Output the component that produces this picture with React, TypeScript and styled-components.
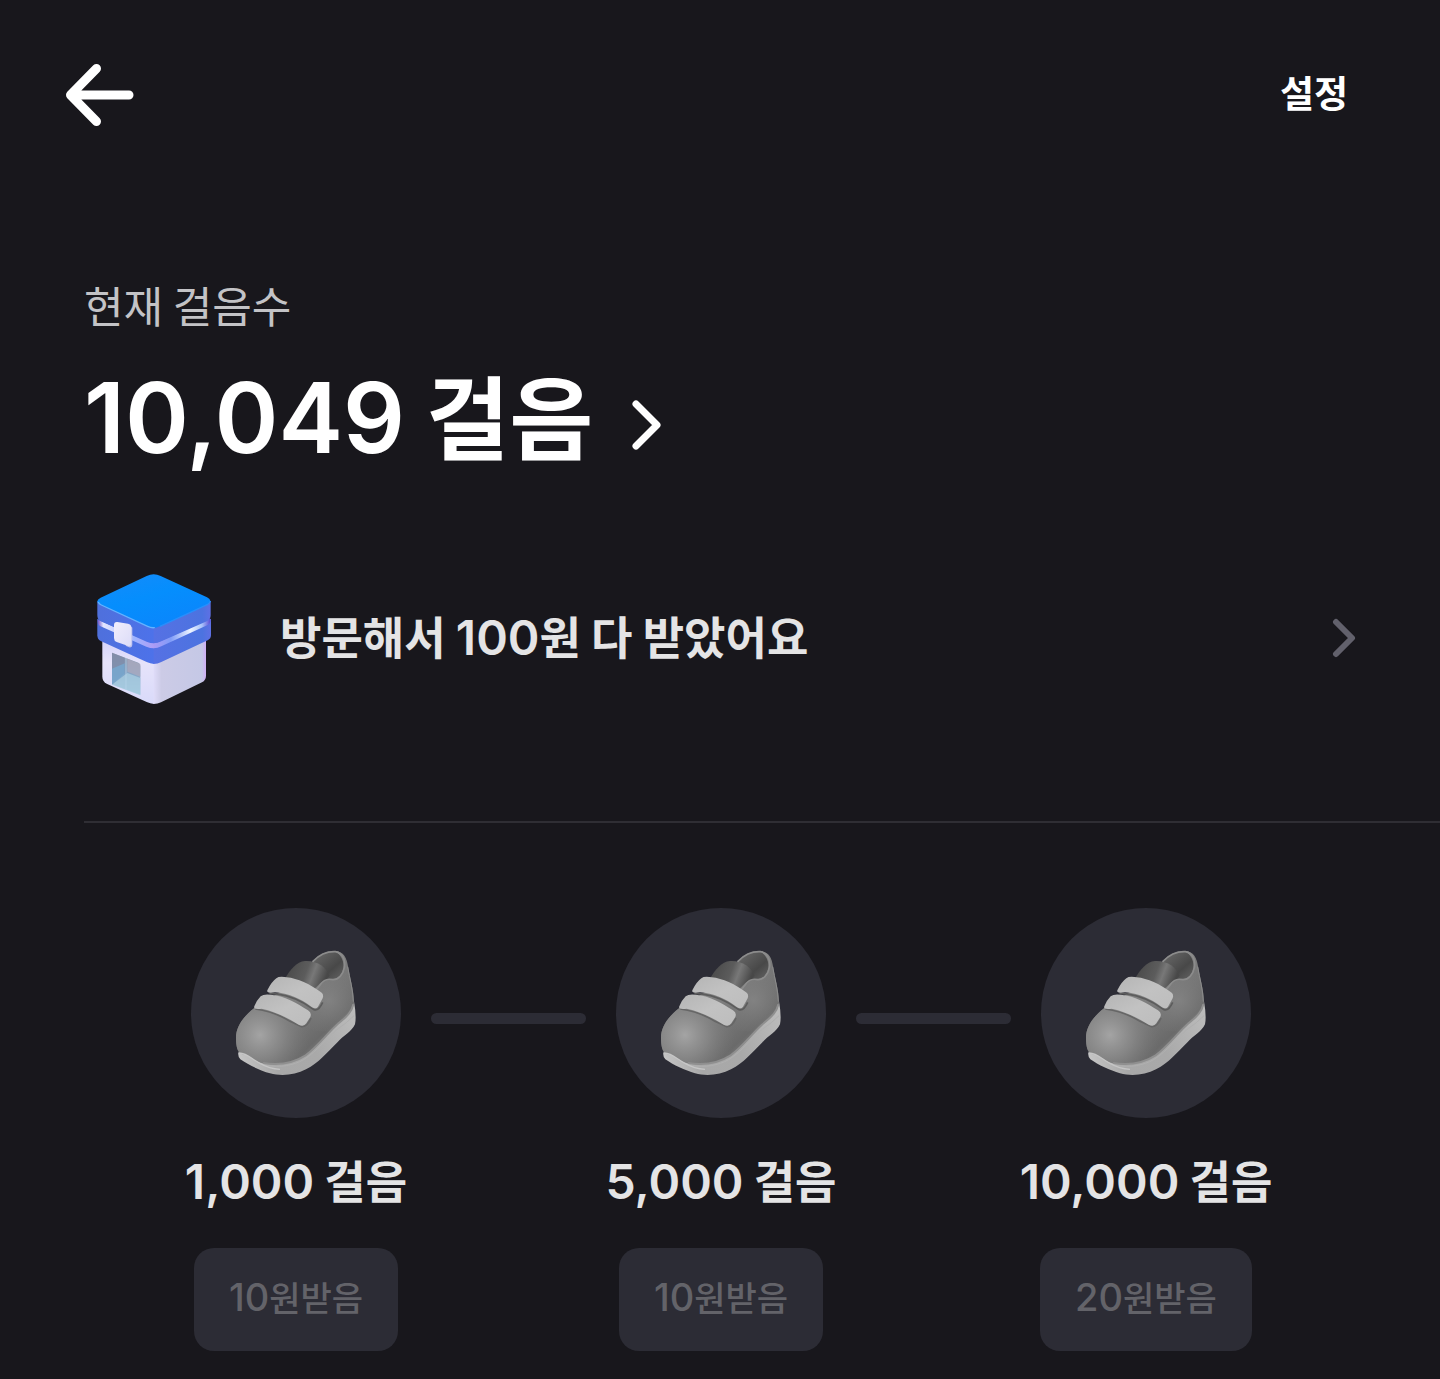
import React from "react";
import styled, { createGlobalStyle } from "styled-components";

const GlobalStyle = createGlobalStyle`
  *, *::before, *::after { box-sizing: border-box; }
  html { background: #18171c; }
  body {
    margin: 0;
    background: #18171c;
    color: #ffffff;
    font-family: Inter, "Noto Sans CJK KR", sans-serif;
  }
  h1, h2, p, ol { margin: 0; padding: 0; }
`;

const Page = styled.main`
  display: flex;
  flex-direction: column;
  padding-bottom: 28px;
`;

const TopBar = styled.header`
  display: flex;
  align-items: center;
  justify-content: space-between;
  height: 190px;
  padding: 0 92px 0 60px;
`;

const PlainButton = styled.button`
  display: flex;
  align-items: center;
  padding: 0;
  border: 0;
  background: none;
  color: inherit;
  font: inherit;
  text-align: left;
  cursor: pointer;
`;

const SettingsButton = styled(PlainButton)`
  font-size: 37px;
  font-weight: 600;
  line-height: 48px;
`;

const Summary = styled.section`
  display: flex;
  flex-direction: column;
  align-items: flex-start;
  padding: 82px 84px 0;
`;

const SummaryLabel = styled.p`
  color: #c3c3c6;
  font-family: "Noto Sans CJK KR", sans-serif;
  font-size: 43px;
  font-weight: 400;
  line-height: 64px;
`;

const SummaryButton = styled(PlainButton)`
  gap: 38px;
  height: 164px;

  svg {
    margin-top: 14px;
  }
`;

const StepTotal = styled.h1`
  font-size: 97px;
  font-weight: 600;
  line-height: 160px;
  white-space: nowrap;
`;

const Hangul = styled.span<{ $size: number }>`
  font-family: "Noto Sans CJK KR", sans-serif;
  font-size: ${({ $size }) => $size}px;
  line-height: 1;
`;

const VisitRow = styled(PlainButton)`
  gap: 56px;
  height: 140px;
  margin: 68px 84px 0;
`;

const VisitText = styled.span`
  flex: 1;
  color: #e4e4e5;
  font-size: 48px;
  font-weight: 600;
  line-height: 64px;
`;

const Divider = styled.hr`
  width: auto;
  height: 2px;
  margin: 113px 0 0 84px;
  border: 0;
  background: #2f2e34;
`;

const Milestones = styled.ol`
  display: flex;
  justify-content: space-between;
  padding: 85px 189px 0 191px;
  list-style: none;
`;

const Milestone = styled.li`
  display: flex;
  flex: none;
  flex-direction: column;
  align-items: center;
  width: 210px;
`;

const Badge = styled.div`
  width: 210px;
  height: 210px;
  border-radius: 50%;
  background: #2c2c35;
`;

const Connector = styled.li`
  flex: 1;
  height: 11px;
  margin: 105px 30px 0;
  border-radius: 6px;
  background: #2c2c35;
`;

const MilestoneLabel = styled.h2`
  margin-top: 32px;
  color: #e4e4e5;
  font-size: 48px;
  font-weight: 600;
  line-height: 64px;
  white-space: nowrap;
`;

const RewardButton = styled.button`
  height: 103px;
  margin-top: 34px;
  padding: 0 35px 6px;
  border: 0;
  border-radius: 20px;
  background: #2c2c35;
  color: #636369;
  font-family: inherit;
  font-size: 38px;
  font-weight: 500;
  line-height: 48px;
  white-space: nowrap;
`;

const BackIcon = () => (
  <svg width="80" height="80" viewBox="0 0 80 80" fill="none" stroke="#fff" strokeWidth="9" strokeLinecap="round" strokeLinejoin="round" aria-hidden="true">
    <path d="M36.500 13.500 L10.500 40 L36.500 66.500 M12 40 H69" />
  </svg>
);

const SummaryChevron = () => (
  <svg width="32" height="52" viewBox="0 0 32 52" fill="none" stroke="#fff" strokeWidth="7" strokeLinecap="round" strokeLinejoin="round" aria-hidden="true">
    <path d="M5 5 L26 26 L5 47" />
  </svg>
);

const RowChevron = () => (
  <svg width="24" height="40" viewBox="0 0 24 40" fill="none" stroke="#62616c" strokeWidth="6" strokeLinecap="round" strokeLinejoin="round" aria-hidden="true">
    <path d="M4 4 L20 20 L4 36" />
  </svg>
);

const StoreIcon = () => (
  <svg width="140" height="140" viewBox="12 24 420 420" aria-hidden="true">
    <defs>
      <linearGradient id="roof" x1="0" y1="0" x2="0.6" y2="1">
        <stop offset="0" stopColor="#168bfa" />
        <stop offset="0.5" stopColor="#058efd" />
        <stop offset="1" stopColor="#0a86fc" />
      </linearGradient>
      <linearGradient id="bandLeft" x1="0" y1="0" x2="1" y2="0">
        <stop offset="0" stopColor="#4f70dc" />
        <stop offset="1" stopColor="#4d72ea" />
      </linearGradient>
      <linearGradient id="bandRight" x1="0" y1="0" x2="1" y2="0">
        <stop offset="0" stopColor="#5671e4" />
        <stop offset="0.85" stopColor="#4c73e0" />
        <stop offset="1" stopColor="#5f70e4" />
      </linearGradient>
      <linearGradient id="wallLeft" x1="0" y1="0" x2="0" y2="1">
        <stop offset="0" stopColor="#cfcffb" />
        <stop offset="0.4" stopColor="#e6e3fa" />
        <stop offset="1" stopColor="#d9dafa" />
      </linearGradient>
      <linearGradient id="wallRight" x1="0" y1="0" x2="1" y2="0">
        <stop offset="0" stopColor="#dfdcf9" />
        <stop offset="0.15" stopColor="#cccbe6" />
        <stop offset="0.92" stopColor="#c5c8e6" />
        <stop offset="1" stopColor="#cfaef6" />
      </linearGradient>
      <linearGradient id="slitLeft" x1="0" y1="0" x2="1" y2="0">
        <stop offset="0" stopColor="#7152c9" />
        <stop offset="0.1" stopColor="#e4e6ff" />
        <stop offset="0.65" stopColor="#9fb4ff" />
        <stop offset="1" stopColor="#ad9cf5" />
      </linearGradient>
      <linearGradient id="slitRight" x1="0" y1="0" x2="1" y2="0">
        <stop offset="0" stopColor="#aa9af5" />
        <stop offset="0.3" stopColor="#809cf8" />
        <stop offset="0.65" stopColor="#edf4ff" />
        <stop offset="0.85" stopColor="#a9c3fb" />
        <stop offset="1" stopColor="#5b4bd5" />
      </linearGradient>
      <linearGradient id="door" x1="0" y1="0" x2="0" y2="1">
        <stop offset="0" stopColor="#8f96aa" />
        <stop offset="0.5" stopColor="#86a5c6" />
        <stop offset="1" stopColor="#9ec5df" />
      </linearGradient>
      <linearGradient id="latch" x1="0" y1="0" x2="1" y2="1">
        <stop offset="0" stopColor="#f1eefc" />
        <stop offset="1" stopColor="#dcdcf8" />
      </linearGradient>
    </defs>
    <path d="M67 225 L222 285 V432 Q211 431 200 426 L80 371 Q67 364 67 350 Z" fill="url(#wallLeft)" />
    <path d="M221 285 L378 225 V347 Q378 360 366 367 L243 427 Q233 432 221 432 Z" fill="url(#wallRight)" />
    <path d="M96 278 L175 308 Q181 311 181 318 V404 L96 373 Z" fill="url(#door)" />
    <path d="M96 278 L134 293 V340 L96 374 Z" fill="#7c89a6" opacity="0.7" />
    <path d="M96 326 L134 310 V343 L96 374 Z" fill="#75add5" opacity="0.7" />
    <path d="M142 296 L181 312 V350 L142 335 Z" fill="#acaabd" opacity="0.75" />
    <path d="M96 374 L142 339 L181 354 V406 Z" fill="#a8cce0" opacity="0.8" />
    <path d="M138 294 V390" stroke="#b8d4eb" strokeWidth="2" />
    <path d="M52 176 L222 248 V312 Q211 311 200 306 L62 243 Q52 238 52 226 Z" fill="url(#bandLeft)" />
    <path d="M221 248 L393 176 V226 Q393 236 383 241 L244 306 Q233 312 221 312 Z" fill="url(#bandRight)" />
    <path d="M53 179 L200 243 Q211 248 222 248 V265 Q210 265 199 260 L60 198 Q53 193 53 179 Z" fill="url(#slitLeft)" />
    <path d="M221 248 Q233 248 244 242 L391 176 Q393 189 383 195 L244 259 Q233 265 221 265 Z" fill="url(#slitRight)" />
    <path d="M52 122 L222 199 V250 Q211 250 200 245 L63 184 Q52 179 52 166 Z" fill="url(#bandLeft)" />
    <path d="M221 199 L392 122 V166 Q392 178 382 183 L244 244 Q233 250 221 250 Z" fill="url(#bandRight)" />
    <path d="M62 113 L200 48 Q221 37 242 48 L381 112 Q401 123 381 134 L239 199 Q221 209 203 199 L62 135 Q42 124 62 113 Z" fill="url(#roof)" />
    <path d="M55 127 Q57 132 64 135 L203 199 Q213 204 223 203" fill="none" stroke="#65b2ff" strokeWidth="4" strokeLinecap="round" />
    <path d="M240 199 L383 133 Q390 129 391 123" fill="none" stroke="#278ffc" strokeWidth="4" />
    <path d="M148 194 L157 203 V255 Q157 264 147 262 L137 257 Z" fill="#bfc2ed" />
    <path d="M102 195 Q102 185 112 186 L144 191 Q154 193 154 203 V250 Q154 260 145 258 L110 246 Q102 243 102 234 Z" fill="url(#latch)" />
  </svg>
);

const ShoeIcon = ({ id }: { id: string }) => (
  <svg width="210" height="210" viewBox="33 24 630 630" aria-hidden="true">
    <defs>
      <linearGradient id={`${id}-body`} gradientUnits="userSpaceOnUse" x1="290" y1="290" x2="440" y2="450">
        <stop offset="0" stopColor="#858585" />
        <stop offset="0.5" stopColor="#757575" />
        <stop offset="0.8" stopColor="#6a6a6a" />
        <stop offset="1" stopColor="#858585" />
      </linearGradient>
      <radialGradient id={`${id}-toe`} gradientUnits="userSpaceOnUse" cx="240" cy="405" r="150">
        <stop offset="0" stopColor="#a4a4a4" />
        <stop offset="0.45" stopColor="#8a8a8a" stopOpacity="0.8" />
        <stop offset="1" stopColor="#747474" stopOpacity="0" />
      </radialGradient>
      <radialGradient id={`${id}-heel`} gradientUnits="userSpaceOnUse" cx="445" cy="300" r="110">
        <stop offset="0" stopColor="#828282" />
        <stop offset="1" stopColor="#777777" stopOpacity="0" />
      </radialGradient>
      <linearGradient id={`${id}-sole`} gradientUnits="userSpaceOnUse" x1="180" y1="470" x2="525" y2="350">
        <stop offset="0" stopColor="#c4c4c4" />
        <stop offset="0.25" stopColor="#a8a8a8" />
        <stop offset="0.6" stopColor="#a9a9a9" />
        <stop offset="1" stopColor="#bbbbbb" />
      </linearGradient>
      <linearGradient id={`${id}-tongue`} gradientUnits="userSpaceOnUse" x1="330" y1="200" x2="435" y2="240">
        <stop offset="0" stopColor="#4c4c4c" />
        <stop offset="0.45" stopColor="#5c5c5c" />
        <stop offset="0.65" stopColor="#787878" />
        <stop offset="1" stopColor="#484848" />
      </linearGradient>
      <linearGradient id={`${id}-lining`} gradientUnits="userSpaceOnUse" x1="420" y1="165" x2="480" y2="235">
        <stop offset="0" stopColor="#626262" />
        <stop offset="0.6" stopColor="#484848" />
        <stop offset="1" stopColor="#5e5e5e" />
      </linearGradient>
      <linearGradient id={`${id}-strap`} x1="0" y1="0" x2="1" y2="1">
        <stop offset="0" stopColor="#b5b5b5" />
        <stop offset="0.5" stopColor="#c2c2c2" />
        <stop offset="1" stopColor="#bdbdbd" />
      </linearGradient>
    </defs>
    <path d="M175 457 Q173 470 181 478 C205 495 240 511 270 520 C305 529 345 525 378 508 C417 488 440 458 471 428 C492 405 514 396 525 373 Q530 350 522 304 L430 360 L260 470 Z" fill={`url(#${id}-sole)`} />
    <path d="M397 184 C417 162 441 152 467 153 C489 155 500 174 502 200 L468 251 L410 267 Z" fill={`url(#${id}-lining)`} />
    <path d="M316 234 C330 210 350 185 375 183 C411 181 439 202 449 227 L410 278 L340 285 Z" fill={`url(#${id}-tongue)`} />
    <path d="M222 325 C189 351 168 380 168 414 C168 440 173 456 183 462 C207 461 223 484 249 490 C296 498 341 489 377 466 C407 447 427 421 449 396 C479 364 520 343 522 306 C521 266 509 234 504 199 C500 171 490 156 467 153 C491 172 495 197 486 218 C478 235 464 242 448 237 C425 239 414 258 397 273 L310 270 Z" fill={`url(#${id}-body)`} />
    <path d="M222 325 C189 351 168 380 168 414 C168 440 173 456 183 462 C207 461 223 484 249 490 C296 498 341 489 377 466 L400 350 Z" fill={`url(#${id}-toe)`} />
    <path d="M504 199 C509 234 521 266 522 306 C520 343 479 364 449 396 L380 390 L397 273 L448 237 Q490 245 494 197 Z" fill={`url(#${id}-heel)`} />
    <path d="M399 184 C420 162 441 154 466 155 C489 160 497 180 493 203 C489 224 475 240 458 239 C430 232 422 255 410 267" fill="none" stroke="#8c8c8c" strokeWidth="5" strokeLinecap="round" />
    <path d="M503 200 C509 235 519 270 520 305" fill="none" stroke="#8c8c8c" strokeWidth="3" />
    <path d="M249 489 C300 497 343 488 377 466 C416 437 441 401 470 375 C495 353 514 341 520 313" fill="none" stroke="#8f8f8f" strokeWidth="6" />
    <path d="M260 497 C300 503 341 496 371 479 C414 452 440 413 473 387 Q499 370 522 347" fill="none" stroke="#b0b0b0" strokeWidth="3" />
    <path d="M177 459 C205 460 217 480 240 490 C257 500 280 507 300 508" fill="none" stroke="#c6c6c6" strokeWidth="4" />
    <path d="M268 280 Q320 281 369 308 L402 329 Q416 334 428 307" fill="none" stroke="#5c5c5c" strokeWidth="5" />
    <path d="M226 327 Q284 335 330 364 L365 380 Q383 380 393 354" fill="none" stroke="#666666" strokeWidth="5" />
    <path d="M262 271 Q274 246 289 235 Q297 228 320 232 C353 235 390 253 421 275 Q433 282 428 295 L414 320 Q408 329 395 321 C360 295 325 280 285 277 Q258 281 262 271 Z" fill={`url(#${id}-strap)`} />
    <path d="M223 319 Q230 301 242 289 Q251 281 272 284 C313 287 351 309 384 331 Q396 338 391 351 L379 370 Q371 382 356 374 C318 351 283 334 245 326 Q218 329 223 319 Z" fill={`url(#${id}-strap)`} />
  </svg>
);

const milestones = [
  { id: "first", steps: "1,000", reward: "10" },
  { id: "second", steps: "5,000", reward: "10" },
  { id: "third", steps: "10,000", reward: "20" },
];

export default function App() {
  return (
    <>
      <GlobalStyle />
      <Page>
        <TopBar>
          <PlainButton type="button" aria-label="뒤로">
            <BackIcon />
          </PlainButton>
          <SettingsButton type="button">설정</SettingsButton>
        </TopBar>

        <Summary>
          <SummaryLabel>현재 걸음수</SummaryLabel>
          <SummaryButton type="button">
            <StepTotal>
              10,049<Hangul $size={91}> 걸음</Hangul>
            </StepTotal>
            <SummaryChevron />
          </SummaryButton>
        </Summary>

        <VisitRow type="button">
          <StoreIcon />
          <VisitText>
            <Hangul $size={45}>방문해서 </Hangul>100<Hangul $size={45}>원 다 받았어요</Hangul>
          </VisitText>
          <RowChevron />
        </VisitRow>

        <Divider />

        <Milestones>
          {milestones.map(({ id, steps, reward }, index) => (
            <React.Fragment key={id}>
              {index > 0 && <Connector aria-hidden="true" />}
              <Milestone>
                <Badge>
                  <ShoeIcon id={id} />
                </Badge>
                <MilestoneLabel>
                  {steps}
                  <Hangul $size={45}> 걸음</Hangul>
                </MilestoneLabel>
                <RewardButton type="button" disabled>
                  {reward}
                  <Hangul $size={34}>원받음</Hangul>
                </RewardButton>
              </Milestone>
            </React.Fragment>
          ))}
        </Milestones>
      </Page>
    </>
  );
}
